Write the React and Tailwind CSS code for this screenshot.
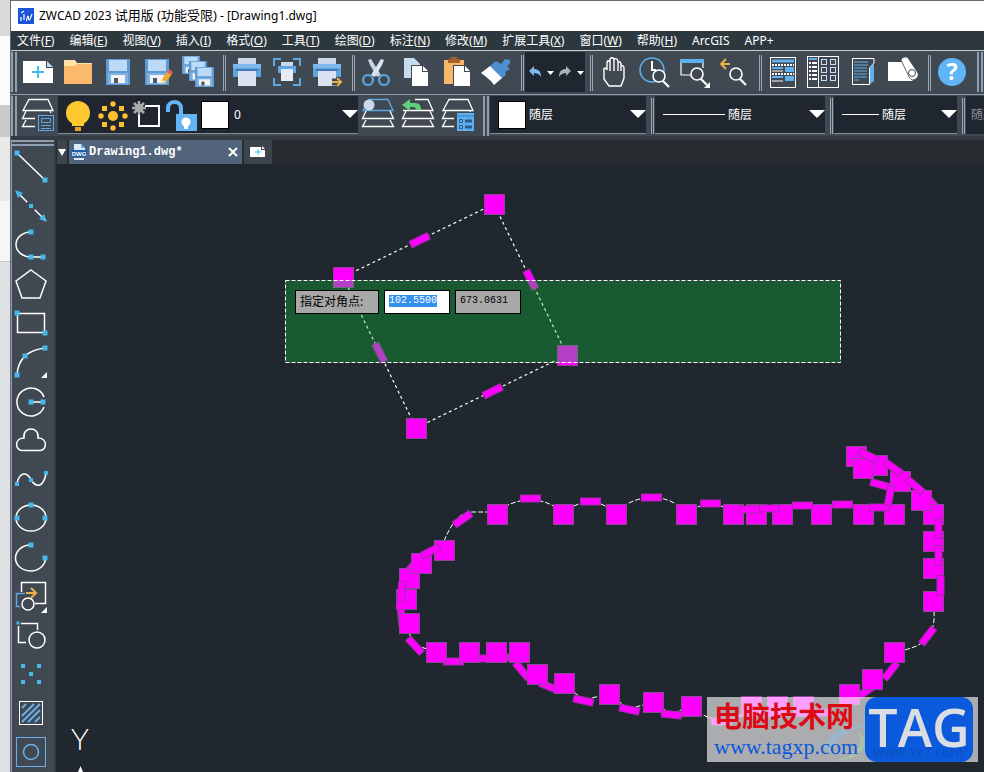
import React, { useState } from "react";

const menus = [
  { name: "文件", key: "F" },
  { name: "编辑", key: "E" },
  { name: "视图", key: "V" },
  { name: "插入", key: "I" },
  { name: "格式", key: "O" },
  { name: "工具", key: "T" },
  { name: "绘图", key: "D" },
  { name: "标注", key: "N" },
  { name: "修改", key: "M" },
  { name: "扩展工具", key: "X" },
  { name: "窗口", key: "W" },
  { name: "帮助", key: "H" },
  { name: "ArcGIS" },
  { name: "APP+" },
];

const LIGHT = "#bcd9f5";
const SKY = "#45b8ec";

const Floppy = ({ x, y, w, h }) => (
  <g transform={`translate(${x} ${y}) scale(${w / 24} ${h / 26})`}>
    <rect width="24" height="26" fill="#5d9bd6" />
    <rect x="3" y="1" width="18" height="11" fill={LIGHT} />
    <rect x="2" y="14" width="20" height="11" fill="#7fb2e2" />
    <rect x="5" y="16" width="14" height="8" fill="#f2f4f6" />
    <rect x="8" y="19" width="4" height="5" fill="#4b5a6b" />
  </g>
);

const Printer = () => (
  <g>
    <rect x="11" y="6" width="18" height="9" fill="#c9d8ea" />
    <rect x="6" y="12" width="28" height="13" fill="#62a4e0" />
    <rect x="6" y="12" width="28" height="4" fill="#7db8ec" />
    <rect x="11" y="18" width="18" height="16" fill="#dbe3f2" />
    <rect x="9" y="17" width="22" height="2" fill="#3f78b4" />
  </g>
);

const Magnifier = ({ cx, cy }) => (
  <g stroke="#fff" fill="none">
    <circle cx={cx} cy={cy} r="6" strokeWidth="1.6" fill="#404951" />
    <path d={`M${cx + 4} ${cy + 5}l6 6`} strokeWidth="2.2" />
  </g>
);

const fileTools = [
  {
    name: "新建",
    icon: (
      <>
        <path d="M5 9H28V16H35V31H5Z" fill="#fff" />
        <path d="M29 9L35 15H29Z" fill={LIGHT} />
        <path d="M20 14V26M14 20H26" stroke={SKY} strokeWidth="2" />
      </>
    ),
  },
  {
    name: "打开",
    icon: (
      <>
        <path d="M6 8H17L19 11H34V16H6Z" fill="#ffe2a6" />
        <path d="M6 14H17L19 12H34V32H6Z" fill="#fbb96d" />
      </>
    ),
  },
  { name: "保存", icon: <Floppy x={8} y={7} w={24} h={26} /> },
  {
    name: "另存为",
    icon: (
      <>
        <Floppy x={7} y={7} w={24} h={26} />
        <path d="M23 32L24 27L30 19L34 22L28 30Z" fill="#f5a623" />
        <path d="M23 32L24 27L28 30Z" fill="#f6dfb8" />
        <path d="M29 20L31 17L35 20L33 23Z" fill="#e0605c" />
      </>
    ),
  },
  {
    name: "全部保存",
    icon: (
      <>
        <Floppy x={4} y={4} w={18} h={18} />
        <Floppy x={11} y={9} w={18} h={20} />
        <Floppy x={17} y={15} w={19} h={20} />
      </>
    ),
  },
];

const printTools = [
  { name: "打印", icon: <Printer /> },
  {
    name: "打印预览",
    icon: (
      <>
        <path d="M7 14V7H14M26 7H33V14M33 26V33H26M14 33H7V26" fill="none" stroke="#5fa8e6" strokeWidth="2" />
        <rect x="14" y="10" width="12" height="5" fill="#c9d8ea" />
        <rect x="11" y="14" width="18" height="7" fill="#5fa8e6" />
        <rect x="14" y="17" width="12" height="12" fill="#e6ebf4" />
      </>
    ),
  },
  {
    name: "发布",
    icon: (
      <>
        <Printer />
        <path d="M25 29H32M30 26L34 30L30 34M25 31H32" fill="none" stroke="#404951" strokeWidth="5" />
        <path d="M25 30H33M30 26L34 30L30 34" fill="none" stroke="#e9b14a" strokeWidth="2" />
      </>
    ),
  },
];

const editTools = [
  {
    name: "剪切",
    icon: (
      <>
        <path d="M12 8L15 7L25 23L21 25L14 13Z" fill="#c3d5ea" />
        <path d="M28 8L25 7L15 23L19 25L26 13Z" fill="#dbe5f2" />
        <circle cx="12" cy="28" r="5" fill="none" stroke="#5fa8e6" strokeWidth="2.2" />
        <circle cx="28" cy="28" r="5" fill="none" stroke="#5fa8e6" strokeWidth="2.2" />
      </>
    ),
  },
  {
    name: "复制",
    icon: (
      <>
        <path d="M8 6H18L24 12V26H8Z" fill="#c6dbf0" />
        <path d="M15 13H27L33 19V35H15Z" fill="#404951" />
        <path d="M16 14H26V20H32V34H16Z" fill="#fff" />
        <path d="M27 14L32 19H27Z" fill="#fff" />
      </>
    ),
  },
  {
    name: "粘贴",
    icon: (
      <>
        <rect x="8" y="8" width="20" height="24" fill="#f9b768" />
        <path d="M12 7H15V5H21V7H24V11H12Z" fill="#a6602c" />
        <path d="M17 13H29L35 19V35H17Z" fill="#404951" />
        <path d="M18 14H28V20H34V34H18Z" fill="#fff" />
        <path d="M29 14L34 19H29Z" fill="#fff" />
      </>
    ),
  },
  {
    name: "特性匹配",
    icon: (
      <>
        <path d="M16 12L20 9L25 12L29 7L34 8V12L31 14L34 17L29 20L30 23L25 27L14 15Z" fill="#4d8fd0" />
        <path d="M14 14L26 26L18 33C15 28 10 25 5 21Z" fill="#fff" />
      </>
    ),
  },
];

const viewTools = [
  {
    name: "平移",
    icon: (
      <path
        d="M10 19C9 16 12 15 13 18V11C13 8 16 8 16 11V19M16 11V8C16 5 20 5 20 8V19M20 8C20 6 23 6 24 9V19M24 11C25 9 27 10 27 12V19M27 14C28 13 30 14 30 16V26L27 34H15L10 27V18"
        fill="none"
        stroke="#fff"
        strokeWidth="1.4"
      />
    ),
  },
  {
    name: "实时缩放",
    icon: (
      <>
        <circle cx="18" cy="18" r="12" fill="none" stroke="#5fb0ee" strokeWidth="1.6" />
        <path d="M18 9V18H22" fill="none" stroke="#fff" strokeWidth="2" />
        <Magnifier cx={25} cy={24} />
      </>
    ),
  },
  {
    name: "窗口缩放",
    icon: (
      <>
        <path d="M7 8V23H17M29 8V16" fill="none" stroke="#fff" strokeWidth="1.2" />
        <rect x="6" y="7" width="24" height="4" fill="#5fb0ee" />
        <Magnifier cx={23} cy={22} />
        <path d="M36 30V36H30Z" fill="#fff" />
      </>
    ),
  },
  {
    name: "缩放上一个",
    icon: (
      <>
        <path d="M16 12H8M12 7L7 12L12 17" fill="none" stroke="#e9b14a" strokeWidth="2" />
        <Magnifier cx={22} cy={22} />
      </>
    ),
  },
];

const panelTools = [
  {
    name: "特性",
    icon: (
      <>
        <rect x="7.5" y="5.5" width="25" height="30" fill="none" stroke="#fff" />
        <path d="M9 9H31" stroke="#5fb0ee" strokeWidth="3" />
        <path d="M9 13H31M9 22H31" stroke="#fff" strokeWidth="2" strokeDasharray="2 1" />
        <path d="M9 16H20M9 25H20" stroke="#5fb0ee" strokeWidth="2" />
        <path d="M9 19H20M9 29H20" stroke="#fff" strokeWidth="1" />
        <rect x="22" y="15" width="9" height="5" fill="#5fb0ee" />
        <rect x="22" y="24" width="9" height="5" fill="#5fb0ee" />
      </>
    ),
  },
  {
    name: "设计中心",
    icon: (
      <>
        <rect x="4.5" y="4.5" width="31" height="31" fill="none" stroke="#fff" />
        <path d="M15.5 5V35" stroke="#fff" />
        <path d="M6 7H14" stroke="#5fb0ee" strokeWidth="2" />
        <path d="M6 11H8M9 11H14M6 15H8M9 15H14M6 19H8M9 19H14M6 23H8M9 23H14M6 27H8M9 27H14" stroke="#fff" strokeWidth="2" />
        <g fill="none" stroke="#c9dcf0">
          <rect x="18.5" y="7.5" width="5" height="5" />
          <rect x="27.5" y="7.5" width="5" height="5" />
          <rect x="18.5" y="15.5" width="5" height="5" />
          <rect x="27.5" y="15.5" width="5" height="5" />
          <rect x="18.5" y="23.5" width="5" height="5" />
          <rect x="27.5" y="23.5" width="5" height="5" />
        </g>
      </>
    ),
  },
  {
    name: "工具选项板",
    icon: (
      <>
        <path d="M31 6.5H9.5V32.5H26.5V16L31 11Z" fill="none" stroke="#fff" />
        <path d="M11 10H25M11 13H25M11 16H24M11 19H24M11 22H24M11 25H24M11 28H16" stroke="#5fb0ee" strokeWidth="1.2" />
        <path d="M27 16L31 12V29L27 32Z" fill="#5fb0ee" />
      </>
    ),
  },
  {
    name: "图纸集",
    icon: (
      <>
        <path d="M5 10H19L30 29H5Z" fill="#fff" />
        <path d="M18 8C19 5 23 4 25 6L35 21C36 25 33 28 29 28L26 25Z" fill="#fff" stroke="#404951" strokeWidth="0.8" />
        <circle cx="29" cy="21" r="3.5" fill="#fff" stroke="#404951" />
      </>
    ),
  },
];

const layersShape = (
  <>
    <path d="M8 15L4.5 22.5H35.5L32 15" fill="none" stroke="#fff" strokeWidth="1.3" />
    <path d="M8 24L4.5 30.5H35.5L32 24" fill="none" stroke="#fff" strokeWidth="1.3" />
  </>
);

const layerTools = [
  {
    name: "将对象的图层置为当前",
    icon: (
      <>
        <path d="M11 3.5H30L35 14.5H5Z" fill="none" stroke="#5fa8e6" strokeWidth="1.3" />
        {layersShape}
        <circle cx="11" cy="9" r="5.5" fill="#c9d8ea" />
      </>
    ),
  },
  {
    name: "上一个图层",
    icon: (
      <>
        <path d="M17 3.5H30L35 14.5H5" fill="none" stroke="#fff" strokeWidth="1.3" />
        {layersShape}
        <path d="M4 9L12 3V7H17C22 7 23 10 23 14H18C18 12 17 11 15 11H12V15Z" fill="#5fd07a" />
      </>
    ),
  },
  {
    name: "图层状态",
    icon: (
      <>
        <path d="M11 3.5H30L35 14.5H5Z" fill="none" stroke="#fff" strokeWidth="1.3" />
        {layersShape}
        <rect x="16" y="16" width="21" height="21" fill="#404951" />
        <rect x="19" y="17" width="17" height="18" fill="#5fb0ee" />
        <path d="M19 20H36" stroke="#3c7fc0" />
        <path d="M21.5 23.5H24.500V26.500H21.500ZM21.500 29.500H24.500V32.500H21.500Z" fill="none" stroke="#2b5a88" />
        <path d="M27 25H34M27 31H34" stroke="#2b5a88" strokeWidth="3" />
      </>
    ),
  },
];

const Sq = ({ x, y, s = 5 }) => (
  <rect x={x - s / 2} y={y - s / 2} width={s} height={s} fill={SKY} stroke="none" />
);

const drawTools = [
  {
    name: "直线",
    icon: (
      <>
        <path d="M5 5L33 32" />
        <Sq x={5} y={5} />
        <Sq x={33} y={32} />
      </>
    ),
  },
  {
    name: "构造线",
    icon: (
      <>
        <path d="M8 8L30 30" />
        <path d="M3 3L11 6L6 11ZM35 35L27 32L32 27Z" fill={SKY} stroke="none" />
        <rect x="15" y="15" width="8" height="8" fill="#404951" stroke="none" />
        <Sq x={19} y={19} s={4} />
      </>
    ),
  },
  {
    name: "多段线",
    icon: (
      <>
        <path d="M19 6A15 12.5 0 0 0 19 31H31" />
        <Sq x={19} y={6} />
        <Sq x={19} y={31} />
        <Sq x={31} y={31} />
      </>
    ),
  },
  { name: "正多边形", icon: <path d="M19 5L34 16L28 33H10L4 16Z" /> },
  {
    name: "矩形",
    icon: (
      <>
        <path d="M5.5 9.5H32.5V28.5H5.5Z" />
        <Sq x={5} y={9} />
        <Sq x={33} y={29} />
      </>
    ),
  },
  {
    name: "圆弧",
    icon: (
      <>
        <path d="M5 32C6 16 16 7 33 5" />
        <Sq x={5} y={32} />
        <Sq x={13} y={13} />
        <Sq x={33} y={5} />
        <path d="M35 29V35H29Z" fill="#fff" stroke="none" />
      </>
    ),
  },
  {
    name: "圆",
    icon: (
      <>
        <path d="M32 15A14 14 0 1 0 32 25M19 20H31" />
        <Sq x={19} y={20} />
        <Sq x={31} y={20} />
      </>
    ),
  },
  {
    name: "修订云线",
    icon: (
      <path d="M10 29.500C3 29.500 2 17 12 17C10 5 28 5 26 17C36 17 35 29.500 28 29.500Z" />
    ),
  },
  {
    name: "样条曲线",
    icon: (
      <>
        <path d="M5 23C8 11 15 12 19 19.500C24 28 31 28 34 14" />
        <Sq x={5} y={24} s={4} />
        <Sq x={19} y={20} s={4} />
        <Sq x={34} y={13} s={4} />
      </>
    ),
  },
  {
    name: "椭圆",
    icon: (
      <>
        <ellipse cx="19" cy="19" rx="15" ry="13" />
        <Sq x={19} y={6} />
        <Sq x={5} y={19} />
        <Sq x={33} y={19} />
      </>
    ),
  },
  {
    name: "椭圆弧",
    icon: (
      <>
        <path d="M19 7A15 13 0 1 0 33.5 20" />
        <Sq x={19} y={7} />
        <Sq x={33} y={20} />
      </>
    ),
  },
  {
    name: "插入块",
    icon: (
      <>
        <path d="M9.5 15V5.5H33.5V26.5H23" />
        <path d="M13 16.5H4.5V29.5H8" stroke="#5fa8e6" />
        <path d="M14 16H24M19 11L24 16L19 21" stroke="#e9b14a" strokeWidth="2" />
        <circle cx="16" cy="27" r="6" />
        <path d="M35 30V36H29Z" fill="#fff" stroke="none" />
      </>
    ),
  },
  {
    name: "创建块",
    icon: (
      <>
        <path d="M9 7.5H25.5V14M6.5 10V26.5H14" />
        <circle cx="25" cy="24" r="8" />
        <Sq x={6} y={7} s={3} />
      </>
    ),
  },
  {
    name: "点",
    icon: (
      <>
        <Sq x={11} y={11} s={4} />
        <Sq x={27} y={11} s={4} />
        <Sq x={19} y={19} s={4} />
        <Sq x={11} y={27} s={4} />
        <Sq x={27} y={27} s={4} />
      </>
    ),
  },
  {
    name: "图案填充",
    icon: (
      <>
        <rect x="7.5" y="7.5" width="23" height="23" strokeWidth="1" />
        <path d="M10 14L14 10M10 22L22 10M10 28L28 10M16 28L28 16M23 28L28 23" stroke="#6ab0ea" strokeWidth="2" />
      </>
    ),
  },
  {
    name: "面域",
    icon: (
      <g stroke="#6ab0ea">
        <rect x="4.5" y="4.5" width="29" height="29" strokeWidth="1" />
        <circle cx="19" cy="19" r="7.5" />
      </g>
    ),
  },
];

// small grips at segment midpoints: x, y, angle
const midGrips = [
  [462, 519, -35], [530, 498, 0], [590, 501, 0], [651, 497, 0],
  [412, 566, -50], [402, 616, 85], [415, 645, 47], [453, 661, 0],
  [483, 658, 0], [508, 657, 0], [522, 670, 50], [549, 686, 22],
  [583, 700, 12], [629, 709, 12], [671, 714, 6], [710, 503, 0],
  [721, 721, 0], [821, 712, 0], [867, 690, -35], [890, 671, -52],
  [927, 636, -52], [932, 502, 50], [880, 484, 15],
];

const topGrips = [
  [430, 551, -28], [402, 591, 95], [749, 509, 0], [769, 508, 0],
  [802, 505, 0], [842, 504, 0], [879, 507, 0], [889, 496, -80],
  [868, 455, 25], [893, 467, 35], [915, 485, 40],
  [939, 528, 90], [939, 555, 90], [941, 585, 90],
];

const vertexGrips = [
  [497, 514], [563, 514], [616, 514], [686, 514], [733, 514], [756, 514],
  [782, 514], [821, 514], [863, 514], [894, 514], [877, 465], [856, 456],
  [863, 468], [900, 481], [933, 514], [921, 500], [933, 541], [933, 568],
  [933, 601], [894, 652], [872, 679], [849, 694], [803, 706], [777, 706],
  [751, 706], [691, 706], [653, 702], [609, 694], [564, 683], [537, 674],
  [519, 652], [496, 652], [469, 652], [436, 652], [409, 623], [406, 599],
  [409, 578], [444, 550], [421, 563],
];

const squareVertices = [[494, 204], [343, 277], [416, 428], [567, 355]];
const squareMids = [[419, 240, -26], [531, 279, 63], [380, 352, 63], [492, 391, -26]];

const Vertex = ({ p }) => (
  <rect x={p[0] - 9.5} y={p[1] - 9.5} width="20" height="20" fill="#ff00ff" stroke="#8f4596" />
);

const Mid = ({ p }) => (
  <rect
    x={p[0] - 9.5}
    y={p[1] - 3}
    width="20"
    height="7"
    fill="#ff00ff"
    stroke="#a02ba8"
    transform={`rotate(${p[2]} ${p[0]} ${p[1]})`}
  />
);

const ToolButton = ({ name, children }) => (
  <button type="button" title={name} aria-label={name} className="h-10 w-10 shrink-0">
    <svg width="40" height="40" viewBox="0 0 40 40">
      {children}
    </svg>
  </button>
);

const Separator = () => (
  <div className="flex h-9 w-[9px] shrink-0 justify-end gap-px self-center pr-px">
    <div className="w-px bg-[#9aa8b8]" />
    <div className="w-px bg-[#9aa8b8]" />
  </div>
);

const Grip = () => (
  <div className="flex h-10 w-[7px] shrink-0 gap-[2px]">
    <div className="w-[2px] bg-[#8f9fb2]" />
    <div className="w-[2px] bg-[#8f9fb2]" />
  </div>
);

const Arrow = () => (
  <svg width="16" height="8" viewBox="0 0 16 8" className="pointer-events-none absolute top-[14px] right-0">
    <path d="M0 0H16L8 8Z" fill="#fff" />
  </svg>
);

const Combo = ({ label, options, className, children }) => (
  <div className={`relative flex h-[38px] shrink-0 items-center border-b border-[#868d95] bg-[#20262f] ${className}`}>
    {children}
    <select
      aria-label={label}
      className="h-full min-w-0 flex-1 appearance-none bg-transparent text-xs text-white outline-none"
    >
      {options.map((option) => (
        <option key={option}>{option}</option>
      ))}
    </select>
    <Arrow />
  </div>
);

const App = () => {
  const [xValue, setXValue] = useState("102.5500");
  const [yValue, setYValue] = useState("673.0631");

  return (
    <div className="flex min-h-screen overflow-hidden bg-[#20272e] font-['Noto_Sans','Noto_Sans_CJK_SC',sans-serif] text-xs text-white">
      {/* Windows behind */}
      <div className="flex w-[10px] shrink-0 flex-col bg-[#dfe2e4]">
        <div className="h-9 bg-[#dadada]" />
        <div className="h-[69px] bg-[#fbfbfb]" />
        <div className="h-8 bg-[#cacaca]" />
        <div className="h-16 bg-[#e9e9e9]" />
        <div className="h-[61px] border-b border-[#c9c9c9] bg-[#f6f6f4]" />
      </div>

      <div className="flex min-w-0 flex-1 flex-col border-t border-l border-[#66696d]">
        {/* Title */}
        <header className="flex h-[30px] items-center gap-[5px] bg-white pl-[7px] text-black">
          <svg width="16" height="16" viewBox="0 0 16 16">
            <rect width="16" height="16" fill="#1c55d8" />
            <path d="M3 13V9M3 5L6 3M6 6V12M8 13C9 13 9 8 10 8C11 8 10 12 11 12C12 12 13 9 14 6" fill="none" stroke="#fff" strokeWidth="1.2" />
          </svg>
          <h1 className="whitespace-nowrap">
            ZWCAD 2023 <span className="text-[13px]">试用版 (功能受限)</span> - [Drawing1.dwg]
          </h1>
        </header>

        {/* Menu */}
        <nav className="flex h-[19px] items-center gap-[15px] overflow-hidden bg-[#2d373e] pl-[6px]">
          {menus.map((menu) => (
            <button key={menu.name} type="button" className="whitespace-nowrap">
              {menu.name}
              {menu.key && (
                <>
                  (<u>{menu.key}</u>)
                </>
              )}
            </button>
          ))}
        </nav>

        {/* Standard toolbar */}
        <div className="flex h-11 overflow-hidden border-t border-[#c3ccd6] bg-[#404951] pt-px">
          <Grip />
          {fileTools.map((tool) => (
            <ToolButton key={tool.name} name={tool.name}>{tool.icon}</ToolButton>
          ))}
          <Separator />
          {printTools.map((tool) => (
            <ToolButton key={tool.name} name={tool.name}>{tool.icon}</ToolButton>
          ))}
          <Separator />
          {editTools.map((tool) => (
            <ToolButton key={tool.name} name={tool.name}>{tool.icon}</ToolButton>
          ))}
          <Separator />
          <div className="flex h-10 w-[60px] shrink-0 bg-[#20262f]">
            <button type="button" aria-label="放弃" className="w-[30px]">
              <svg width="30" height="40" viewBox="0 0 30 40">
                <path d="M4 19L9 14V17C13 17 16 19 16 25C14 22 12 21 9 21V24Z" fill="#7fb9f0" />
                <path d="M22 19H29L25.5 23Z" fill="#fff" />
              </svg>
            </button>
            <button type="button" aria-label="重做" className="w-[30px]">
              <svg width="30" height="40" viewBox="0 0 30 40">
                <path d="M16 19L11 14V17C7 17 4 19 4 25C6 22 8 21 11 21V24Z" fill="#a9b0b8" />
                <path d="M22 19H29L25.5 23Z" fill="#fff" />
              </svg>
            </button>
          </div>
          <Separator />
          {viewTools.map((tool) => (
            <ToolButton key={tool.name} name={tool.name}>{tool.icon}</ToolButton>
          ))}
          <Separator />
          {panelTools.map((tool) => (
            <ToolButton key={tool.name} name={tool.name}>{tool.icon}</ToolButton>
          ))}
          <Separator />
          <ToolButton name="帮助">
            <circle cx="20" cy="20" r="14" fill="#5fb5f5" />
            <text x="20" y="28" textAnchor="middle" fontSize="23" fontWeight="700" fill="#fff">?</text>
          </ToolButton>
          <div className="w-[5px] shrink-0" />
          <Grip />
        </div>

        {/* Layer and property toolbar */}
        <div className="flex h-[42px] overflow-hidden border-t border-[#8f9db0] bg-[#404951] pt-px">
          <Grip />
          <ToolButton name="图层特性管理器">
            <path d="M11 3.5H30L35 14.5H5Z" fill="none" stroke="#fff" strokeWidth="1.3" />
            {layersShape}
            <rect x="17" y="17" width="20" height="20" fill="#404951" />
            <rect x="20.5" y="19.5" width="15" height="15" fill="none" stroke="#5fa8e6" />
            <path d="M23.5 22.5H32.500V26.500H23.500ZM23 29.500H33M23 32.500H33" fill="none" stroke="#5fa8e6" />
          </ToolButton>
          <Combo label="图层" options={["0"]} className="w-[300px] pl-[3px]">
            <svg width="34" height="38" viewBox="0 0 34 38">
              <circle cx="17" cy="17" r="12" fill="#fdc92f" />
              <path d="M11 25H23V30H11Z" fill="#fdc92f" />
              <path d="M14 33H20" stroke="#e8a51f" strokeWidth="4" />
            </svg>
            <svg width="34" height="38" viewBox="0 0 34 38">
              <g fill="#fdc02f">
                <circle cx="18" cy="20" r="5" />
                <circle cx="18" cy="8" r="2.7" />
                <circle cx="18" cy="32" r="2.7" />
                <circle cx="6" cy="20" r="2.7" />
                <circle cx="30" cy="20" r="2.7" />
                <rect x="7" y="10" width="5" height="5" />
                <rect x="24" y="10" width="5" height="5" />
                <rect x="7" y="26" width="5" height="5" />
                <rect x="24" y="26" width="5" height="5" />
              </g>
            </svg>
            <svg width="34" height="38" viewBox="0 0 34 38">
              <path d="M16 10H30V30H10V18" fill="none" stroke="#fff" strokeWidth="2" />
              <path d="M10 5V19M3 12H17M5 7L15 17M15 7L5 17" stroke="#a9abad" strokeWidth="2.5" />
              <circle cx="10" cy="12" r="4" fill="#a9abad" />
            </svg>
            <svg width="34" height="38" viewBox="0 0 34 38">
              <path d="M5 16V12C5 4 18 4 18 12V18" fill="none" stroke="#62b4f4" strokeWidth="4" />
              <rect x="13" y="18" width="21" height="17" fill="#62b4f4" />
              <circle cx="23" cy="26" r="4.5" fill="#fff" />
              <path d="M23 26V33" stroke="#fff" strokeWidth="4" />
            </svg>
            <div className="mr-[5px] ml-1 h-7 w-7 border border-black bg-white" />
          </Combo>
          {layerTools.map((tool) => (
            <ToolButton key={tool.name} name={tool.name}>{tool.icon}</ToolButton>
          ))}
          <div className="w-[5px] shrink-0" />
          <Grip />
          <Combo label="颜色" options={["随层"]} className="w-[156px] pl-2">
            <div className="mr-[3px] h-7 w-7 border border-black bg-white" />
          </Combo>
          <Separator />
          <Combo label="线型" options={["随层"]} className="w-[170px] pl-2">
            <div className="mr-[3px] h-px w-[62px] bg-white" />
          </Combo>
          <Separator />
          <Combo label="线宽" options={["随层"]} className="w-[123px] pl-2">
            <div className="mr-[3px] h-px w-[37px] bg-white" />
          </Combo>
          <Separator />
          <button type="button" disabled className="h-[38px] flex-1 overflow-hidden bg-[#20262f] pl-[5px] text-left whitespace-nowrap text-[#8b9198]">
            随颜色
          </button>
        </div>
        <div className="h-1 bg-[#343b42]" />

        <div className="flex flex-1">
          {/* Draw toolbar */}
          <aside className="flex w-[45px] shrink-0 flex-col border-r-2 border-l border-r-[#343b42] border-l-[#8f9db0] bg-[#404951]">
            <div className="flex h-2 flex-col gap-[2px]">
              <div className="h-[2px] bg-[#8f9fb2]" />
              <div className="h-[2px] bg-[#8f9fb2]" />
            </div>
            {drawTools.map((tool) => (
              <button key={tool.name} type="button" title={tool.name} aria-label={tool.name} className="h-[39px] w-10">
                <svg width="40" height="39" viewBox="0 0 40 39" fill="none" stroke="#fff" strokeWidth="1.5">
                  {tool.icon}
                </svg>
              </button>
            ))}
          </aside>

          <main className="flex min-w-0 flex-1 flex-col">
            {/* Drawing tabs */}
            <div className="flex h-6 items-stretch gap-[2px] bg-[#282c30] pl-px">
              <button type="button" aria-label="图纸列表" className="flex w-[10px] items-center justify-center bg-[#3d444b]">
                <svg width="8" height="7" viewBox="0 0 8 7">
                  <path d="M0 0H8L4 7Z" fill="#fff" />
                </svg>
              </button>
              <div className="flex w-[173px] items-center bg-[#51647c] pl-[2px] font-['Liberation_Mono',monospace] font-bold">
                <svg width="16" height="16" viewBox="0 0 16 16">
                  <path d="M3 0H10L14 4V10H3Z" fill="#dcebfa" />
                  <path d="M10 0V4H14Z" fill="#5fa8e6" />
                  <rect y="6" width="16" height="7" fill="#1b5fae" />
                  <path d="M3 15H13" stroke="#dcebfa" strokeWidth="2" />
                  <text x="8" y="12" textAnchor="middle" fontSize="6" fontFamily="Liberation Sans" fill="#fff">DWG</text>
                </svg>
                <span className="ml-[2px] flex-1">Drawing1.dwg*</span>
                <button type="button" aria-label="关闭" className="mr-1">
                  <svg width="10" height="10" viewBox="0 0 10 10">
                    <path d="M1 1L9 9M9 1L1 9" stroke="#fff" strokeWidth="2" />
                  </svg>
                </button>
              </div>
              <button type="button" aria-label="新建图纸" className="flex w-7 items-center justify-center bg-[#3d444b]">
                <svg width="16" height="12" viewBox="0 0 16 12">
                  <path d="M0 1H11V4H15V11H0Z" fill="#fff" />
                  <path d="M12 0L15 3H12Z" fill="#fff" />
                  <path d="M8 3V9M5 6H11" stroke={SKY} />
                </svg>
              </button>
            </div>

            {/* Drawing area */}
            <div className="relative flex-1 overflow-hidden">
              <svg width="928" height="608" viewBox="56 164 928 608" className="absolute top-0 left-0">
                <path d="M494 204L343 277L416 428L567 355Z" fill="none" stroke="#fff" strokeWidth="1.2" strokeDasharray="3 3" />
                <path
                  d="M444 541C452 522 460 512 472 512H497C515 497 545 494 563 514C580 498 600 498 616 514C630 494 670 490 686 514C700 502 720 500 733 514M934 611C936 640 920 648 894 652M409 633L415 645L436 652M564 683L583 700L609 694L629 709L653 702L671 714L691 706C710 724 735 726 751 706"
                  fill="none"
                  stroke="#fff"
                  strokeDasharray="5 2"
                />
                {squareVertices.map((p, i) => <Vertex key={i} p={p} />)}
                {squareMids.map((p, i) => <Mid key={i} p={p} />)}
                {midGrips.map((p, i) => <Mid key={i} p={p} />)}
                {vertexGrips.map((p, i) => <Vertex key={i} p={p} />)}
                {topGrips.map((p, i) => <Mid key={i} p={p} />)}
                {/* crossing selection window */}
                <rect x="285.5" y="280.5" width="555" height="82" fill="rgb(10 210 60 / 0.3)" />
                <rect x="285.5" y="280.5" width="555" height="82" fill="none" stroke="#fff" strokeDasharray="4 2" />
                {/* UCS icon */}
                <text x="80" y="750" textAnchor="middle" fontSize="30" fontWeight="300" fontFamily="Lato" fill="#fff">Y</text>
                <path d="M80.5 766L83 772H78Z" fill="#fff" />
              </svg>

              {/* Dynamic input */}
              <div className="absolute top-[126px] left-[239px] flex h-6 gap-[5px] text-black">
                <label htmlFor="corner-x" className="flex w-[84px] items-center border border-black bg-[#a8a8a8] pl-1 whitespace-nowrap">
                  指定对角点:
                </label>
                <div className="w-[66px] border border-black bg-white pt-1 pl-1">
                  <input
                    id="corner-x"
                    value={xValue}
                    onChange={(e) => setXValue(e.target.value)}
                    className="block h-3 w-12 bg-[#3390ee] font-['Liberation_Mono',monospace] text-[10px] leading-3 text-white outline-none"
                  />
                </div>
                <input
                  aria-label="Y"
                  value={yValue}
                  onChange={(e) => setYValue(e.target.value)}
                  className="w-[66px] border border-black bg-[#a8a8a8] pb-[2px] pl-1 font-['Liberation_Mono',monospace] text-[10px] outline-none"
                />
              </div>

              {/* Site badge */}
              <div className="absolute right-[6px] bottom-[10px] flex h-[65px] w-[271px] justify-between bg-white/62 pr-[5px] pl-[7px]">
                <svg width="50" height="40" viewBox="0 0 50 40" className="absolute right-[105px] bottom-0">
                  <path d="M0 26C8 8 28 0 48 4C28 6 14 14 8 32Z" fill="#8cc4ea" opacity="0.4" />
                  <path d="M12 38C30 36 42 24 36 10C50 20 38 40 12 38Z" fill="#a9d4a0" opacity="0.5" />
                </svg>
                <div className="relative whitespace-nowrap">
                  <p className="h-9 font-['Noto_Sans_CJK_SC',sans-serif] text-[28px] leading-9 font-bold text-[#dc0a14]">电脑技术网</p>
                  <a href="#site" className="block font-['Liberation_Serif',serif] text-[22px] leading-7 text-[#0a58da]">www.tagxp.com</a>
                </div>
                <div className="relative flex w-[108px] justify-center rounded-xl bg-[#0a5adb]">
                  <span className="absolute bottom-0 left-2 text-sm leading-5 text-[#0b51c4]">www.xz7.com</span>
                  <span className="relative font-['Open_Sans',sans-serif] text-[52px] leading-[60px] font-semibold text-[#dadde2]">TAG</span>
                </div>
              </div>
            </div>
          </main>
        </div>
      </div>
    </div>
  );
};

export default App;
